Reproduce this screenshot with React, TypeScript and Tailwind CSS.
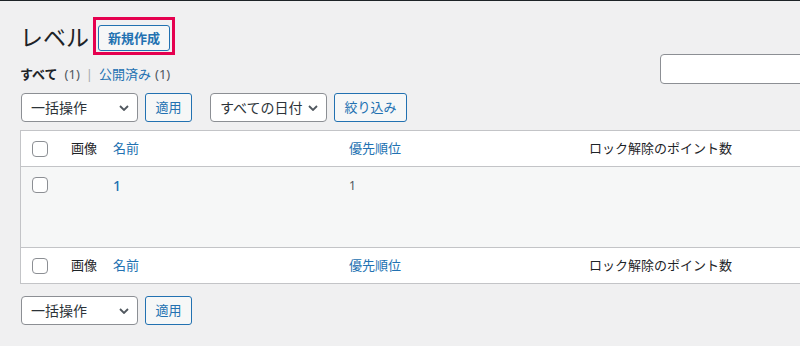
import React from "react";

const font = { fontFamily: '"Noto Sans", "Noto Sans CJK JP", sans-serif' };

const Chevron = () => (
  <svg width="10" height="6" viewBox="0 0 10 6" className="shrink-0">
    <polyline points="1,1 5,5 9,1" fill="none" stroke="#50575e" strokeWidth="1.8" />
  </svg>
);

const Select = ({ label }: { label: string }) => (
  <div className="flex h-[29px] w-[117px] items-center justify-between rounded-[4px] border border-[#8c8f94] bg-white pl-[9px] pr-[8px] text-[14px] leading-none text-[#2c3338]">
    <span>{label}</span>
    <Chevron />
  </div>
);

const Btn = ({ label, w }: { label: string; w: string }) => (
  <div className={`flex h-[29px] ${w} items-center justify-center rounded-[3px] border border-[#2271b1] bg-[#f6f7f7] text-[13px] leading-none text-[#2271b1]`}>
    {label}
  </div>
);

const Check = () => <div className="h-[16px] w-[16px] rounded-[4px] border border-[#8c8f94] bg-white" />;

const HeadRow = ({ bottom }: { bottom?: boolean }) => (
  <div
    className={`grid h-[36px] grid-cols-[40px_42px_236px_240px_1fr] items-center whitespace-nowrap bg-white text-[13px] leading-none ${
      bottom ? "border-t border-[#c3c4c7]" : "border-b border-[#c3c4c7]"
    }`}
  >
    <div className="pl-[11px]">
      <Check />
    </div>
    <div className="pl-[10px] text-[#1d2327]">画像</div>
    <div className="px-[10px] text-[#2271b1]">名前</div>
    <div className="px-[10px] text-[#2271b1]">優先順位</div>
    <div className="px-[10px] text-[#1d2327]">ロック解除のポイント数</div>
  </div>
);

export default function App() {
  return (
    <div className="h-[346px] w-[800px] overflow-hidden bg-[#f0f0f1]" style={font}>
      <div className="h-px bg-[#1d2327]" />
      <div className="w-[900px] pl-[20px]">
        {/* Title */}
        <div className="flex h-[53px] items-end">
          <h1 className="mb-[5px] text-[23px] leading-none text-[#1d2327]">レベル</h1>
          <div className="ml-[4px] mb-[-1px] h-[38px] border-[3px] border-[#e5004f] px-[2px] pt-[5px]">
            <div className="flex h-[26px] w-[72px] items-center justify-center rounded-[3px] border border-[#2271b1] bg-[#f6f7f7] text-[13px] font-semibold leading-none text-[#2271b1]">
              新規作成
            </div>
          </div>
        </div>

        {/* Views + search */}
        <div className="flex items-start">
          <div className="flex-1 pt-[14px] text-[13px] leading-none">
            <span className="font-semibold text-[#1d2327]">すべて</span>
            <span className="ml-[7px] text-[#50575e]">(1)</span>
            <span className="mx-[6px] text-[#a7aaad]">|</span>
            <span className="text-[#2271b1]">公開済み</span>
            <span className="ml-[4px] text-[#50575e]">(1)</span>
          </div>
          <div className="h-[30px] w-[240px] rounded-[4px] border border-[#8c8f94] bg-white" />
        </div>

        {/* Top tablenav */}
        <div className="mt-[9px] flex items-center pl-px">
          <Select label="一括操作" />
          <div className="ml-[7px]">
            <Btn label="適用" w="w-[47px]" />
          </div>
          <div className="ml-[18px]">
            <Select label="すべての日付" />
          </div>
          <div className="ml-[7px]">
            <Btn label="絞り込み" w="w-[73px]" />
          </div>
        </div>

        {/* Table */}
        <div className="mt-[8px] border border-[#c3c4c7]">
          <HeadRow />
          <div className="grid h-[80px] grid-cols-[40px_42px_236px_240px_1fr] items-start bg-[#f6f7f7] pt-[10px] text-[13px] leading-none">
            <div className="pl-[11px]">
              <Check />
            </div>
            <div className="px-[10px]" />
            <div className="px-[10px] pt-[2px] text-[14px] font-medium text-[#2271b1]">1</div>
            <div className="px-[10px] pt-[3px] text-[12px] text-[#50575e]">1</div>
            <div className="px-[10px]" />
          </div>
          <HeadRow bottom />
        </div>

        {/* Bottom tablenav */}
        <div className="mt-[12px] flex items-center pl-px">
          <Select label="一括操作" />
          <div className="ml-[7px]">
            <Btn label="適用" w="w-[47px]" />
          </div>
        </div>
      </div>
    </div>
  );
}
